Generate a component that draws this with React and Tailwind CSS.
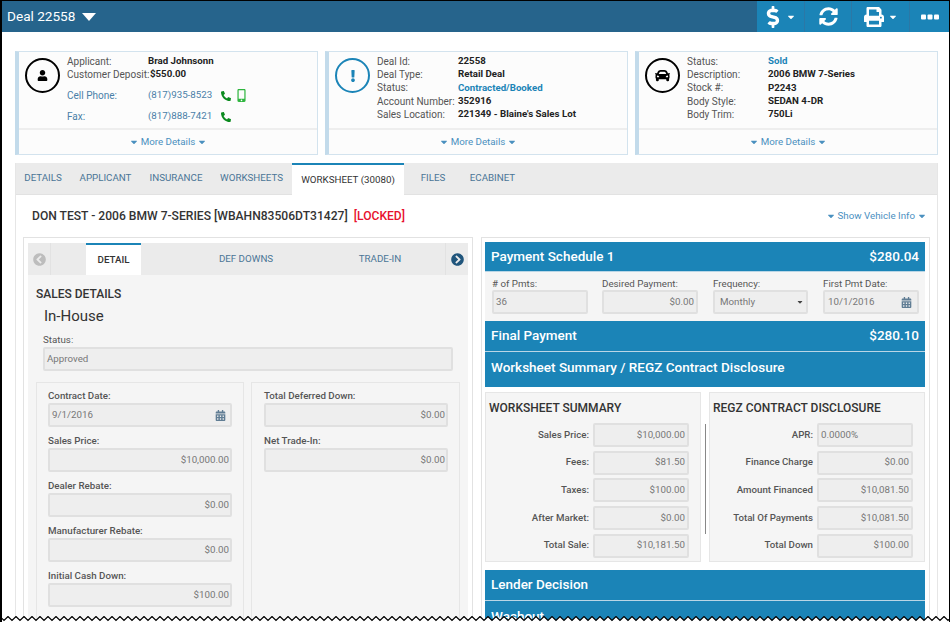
import React from 'react';

import {
  FaCalendarAlt,
  FaCar,
  FaCaretDown,
  FaChevronCircleLeft,
  FaChevronCircleRight,
  FaDollarSign,
  FaExclamation,
  FaMobileAlt,
  FaPhoneAlt,
  FaPrint,
  FaSyncAlt,
  FaUser,
} from 'react-icons/fa';

const Caret = ({ size = 10, className = '' }) => <FaCaretDown size={size} className={className} />;

const MoreLink = ({ label }) => (
  <span className="flex items-center gap-[2px] text-[9.75px] text-[#4a90bf]">
    <Caret />
    {label}
    <Caret />
  </span>
);

const InfoRow = ({ label, value, valueClass = 'font-bold text-[#222]' }) => (
  <div className="flex h-[13.4px] items-center">
    <span className="w-[81px] shrink-0 whitespace-nowrap text-[#555]">{label}</span>
    <span className={`whitespace-nowrap text-[9.7px] ${valueClass}`}>{value}</span>
  </div>
);

const Card = ({ icon, ringClass, children }) => (
  <div className="flex h-[104px] w-[303px] shrink-0 flex-col border border-l-[4px] border-[#d3e3ee] border-l-[#c3dbeb] bg-[#fcfcfc]">
    <div className="flex h-[78px] border-b-2 border-[#eeeeee] pl-[6px] pt-[2.5px] text-[10px]">
      <div className={`mt-[3.5px] flex h-[35px] w-[35px] shrink-0 items-center justify-center rounded-full border-[2px] ${ringClass}`}>
        {icon}
      </div>
      <div className="ml-[7px] flex-1">{children}</div>
    </div>
    <div className="flex flex-1 items-center justify-center">
      <MoreLink label="More Details" />
    </div>
  </div>
);

const Input = ({ value, right, icon, className = '' }) => (
  <div className={`flex h-[24px] items-center justify-between rounded-[2px] border-2 border-[#e0e0e0] bg-[#eeeeee] px-[2px] text-[9.75px] text-[#777] ${className}`}>
    {right && <span />}
    <span>{value}</span>
    {icon}
  </div>
);

const Field = ({ label, value, icon, right = true }) => (
  <div className="mb-[7px]">
    <div className="mb-px h-[13px] text-[9.75px] font-medium leading-[13px] text-[#555]">{label}</div>
    <Input value={value} right={right} icon={icon} className="pr-px" />
  </div>
);

const BlueBar = ({ title, amount, className = '' }) => (
  <div className={`flex items-center justify-between border-b border-[#b9d6e6] bg-[#1b84b7] px-[6px] text-[13.5px] font-medium text-white ${className}`}>
    <span>{title}</span>
    {amount && <span>{amount}</span>}
  </div>
);

const SummaryRow = ({ label, value, left }) => (
  <div className="mb-[3.7px] flex items-center justify-end">
    <span className="mr-1 whitespace-nowrap text-[9.7px] font-medium text-[#555]">{label}</span>
    <Input value={value} right={!left} className="w-[96px]" />
  </div>
);

const calendar = <FaCalendarAlt size={11} className="mr-[3px] text-[#607d94]" />;

const mainTabs = [
  ['DETAILS', 'w-[54px]'],
  ['APPLICANT', 'w-[71px]'],
  ['INSURANCE', 'w-[70px]'],
  ['WORKSHEETS', 'w-[81px]'],
  ['WORKSHEET (30080)', 'w-[112px]'],
  ['FILES', 'w-[58px]'],
  ['ECABINET', 'w-[61px]'],
];

const summary = [
  ['Sales Price:', '$10,000.00'],
  ['Fees:', '$81.50'],
  ['Taxes:', '$100.00'],
  ['After Market:', '$0.00'],
  ['Total Sale:', '$10,181.50'],
];

const disclosure = [
  ['APR:', '0.0000%'],
  ['Finance Charge', '$0.00'],
  ['Amount Financed', '$10,081.50'],
  ['Total Of Payments', '$10,081.50'],
  ['Total Down', '$100.00'],
];

// torn paper edge along the bottom of the screenshot
const tornEdge = () => {
  const points = [];
  for (let x = 0; x <= 956; x += 4) {
    points.push(`${x},${x % 8 === 0 ? 4.5 : 0.5}`);
  }
  return points.join(' ');
};

const App = () => (
  <div className="relative h-[622px] w-[950px] overflow-hidden border-t border-r border-l-2 border-black bg-white text-[#333]" style={{ fontFamily: 'Roboto, sans-serif' }}>
    <header className="flex h-[31px] items-stretch justify-between bg-[#26648c] text-white">
      <div className="flex items-center pl-[5px] text-[13.6px]">
        Deal 22558
        <svg width="14" height="8" viewBox="0 0 14 8" className="ml-[7px]"><path d="M0 0h14L7 8z" fill="#fff" /></svg>
      </div>
      <div className="flex bg-[#1b84b7]">
        <div className="flex w-[48px] items-center justify-center gap-[2px] border-r border-[#2b78a6] pr-[3px]">
          <FaDollarSign size={22} />
          <Caret />
        </div>
        <div className="flex w-[47px] items-center justify-center border-r border-[#2b78a6]">
          <FaSyncAlt size={19} />
        </div>
        <div className="flex w-[58px] items-center justify-center gap-[4px] border-r border-[#2b78a6]">
          <FaPrint size={20} />
          <Caret />
        </div>
        <div className="flex w-[39px] items-center justify-center">
          <svg width="18" height="6" viewBox="0 0 18 6" fill="#fff"><rect width="5" height="5" y="0.5" rx="1" /><rect x="6.5" width="5" height="5" y="0.5" rx="1" /><rect x="13" width="5" height="5" y="0.5" rx="1" /></svg>
        </div>
      </div>
    </header>

    <div className="pl-[13px] pr-[8px] pt-[19px]">
      <div className="flex gap-[7px]">
        <Card ringClass="border-black" icon={<FaUser size={11} className="text-black" />}>
          <InfoRow label="Applicant:" value="Brad Johnsonn" />
          <InfoRow label="Customer Deposit:" value={<span className="ml-[2px]">$550.00</span>} />
          <div className="mt-[7.5px] flex h-[14px] items-center text-[#4a7fa8]">
            <span className="w-[81px]">Cell Phone:</span>
            <span className="text-[9.75px]">(817)935-8523</span>
            <FaPhoneAlt size={10} className="ml-[9px] text-[#0a8a1e]" />
            <FaMobileAlt size={13} className="ml-[4px] text-[#2fb53f]" />
          </div>
          <div className="mt-[7px] flex h-[14px] items-center text-[#4a7fa8]">
            <span className="w-[81px]">Fax:</span>
            <span className="text-[9.75px]">(817)888-7421</span>
            <FaPhoneAlt size={10} className="ml-[9px] text-[#0a8a1e]" />
          </div>
        </Card>
        <Card ringClass="border-[#1b84b7]" icon={<FaExclamation size={12} className="text-[#1b84b7]" />}>
          <InfoRow label="Deal Id:" value="22558" />
          <InfoRow label="Deal Type:" value="Retail Deal" />
          <InfoRow label="Status:" value="Contracted/Booked" valueClass="font-bold text-[#1b84b7]" />
          <InfoRow label="Account Number:" value="352916" />
          <InfoRow label="Sales Location:" value="221349 - Blaine's Sales Lot" />
        </Card>
        <Card ringClass="border-black" icon={<FaCar size={15} className="text-black" />}>
          <InfoRow label="Status:" value="Sold" valueClass="font-bold text-[#1b84b7]" />
          <InfoRow label="Description:" value="2006 BMW 7-Series" />
          <InfoRow label="Stock #:" value="P2243" />
          <InfoRow label="Body Style:" value="SEDAN 4-DR" />
          <InfoRow label="Body Trim:" value="750Li" />
        </Card>
      </div>

      <div className="mt-[8px] w-[923px] border-x border-[#e6e6e6]">
        <nav className="flex h-[32px] border-b border-[#e2e2e2] bg-[#ebebeb] text-[9.75px] text-[#4a7596]">
          {mainTabs.map(([tab, width], i) => (
            <div
              key={tab}
              className={i === 4
                ? `-mb-px flex items-center justify-center border-t-2 border-[#1b84b7] bg-white text-[#333] ${width}`
                : `flex items-center justify-center ${width}`}
            >
              {tab}
            </div>
          ))}
        </nav>

        <div className="flex h-[42px] items-center justify-between pl-[16px] pr-[10px]">
          <div className="text-[12.1px] font-medium text-[#333]">
            DON TEST - 2006 BMW 7-SERIES [WBAHN83506DT31427]
            <span className="ml-[6px] text-[#e8112d]">[LOCKED]</span>
          </div>
          <MoreLink label="Show Vehicle Info" />
        </div>

        <div className="flex gap-[8px] pl-[7px]">
          <section className="h-[400px] w-[450px] border border-[#e2e2e2] px-[4px] pt-[5px]">
            <div className="h-full bg-[#f5f5f5]">
              <div className="flex h-[32px] bg-[#ebebeb] text-[9.75px] text-[#4a7596]">
                <div className="flex w-[23px] items-center justify-center border-r border-[#e2e2e2]">
                  <FaChevronCircleLeft size={13} className="text-[#bdbdbd]" />
                </div>
                <div className="w-[35px]" />
                <div className="flex w-[55px] items-center justify-center border-t-2 border-[#1b84b7] bg-white font-medium text-[#333]">DETAIL</div>
                <div className="flex w-[210px] items-center justify-center">DEF DOWNS</div>
                <div className="flex w-[58px] items-center justify-center">TRADE-IN</div>
                <div className="ml-auto flex w-[23px] items-center justify-center border-l border-[#e2e2e2]">
                  <FaChevronCircleRight size={13} className="text-[#20557c]" />
                </div>
              </div>

              <div className="px-[8px] pt-[12px]">
                <div className="text-[12px] font-medium leading-[14px] text-[#333]">SALES DETAILS</div>
                <div className="ml-[8px] mt-[6px] text-[15px] leading-[18px] text-[#333]">In-House</div>
                <div className="mx-[7px] mt-[8px]">
                  <div className="mb-px text-[9.75px] leading-[13px] text-[#555]">Status:</div>
                  <Input value="Approved" />
                </div>
                <div className="mt-[11px] flex gap-[7px]">
                  <div className="h-[240px] w-[208px] shrink-0 border border-[#e6e6e6] px-[11px] pt-[6px]">
                    <Field label="Contract Date:" value="9/1/2016" right={false} icon={calendar} />
                    <Field label="Sales Price:" value="$10,000.00" />
                    <Field label="Dealer Rebate:" value="$0.00" />
                    <Field label="Manufacturer Rebate:" value="$0.00" />
                    <Field label="Initial Cash Down:" value="$100.00" />
                  </div>
                  <div className="h-[240px] w-[209px] shrink-0 border border-[#e6e6e6] pl-[12px] pr-[11px] pt-[6px]">
                    <Field label="Total Deferred Down:" value="$0.00" />
                    <Field label="Net Trade-In:" value="$0.00" />
                  </div>
                </div>
              </div>
            </div>
          </section>

          <section className="h-[400px] w-[449px] border border-[#e2e2e2] pl-[3px] pr-[4px] pt-[4px]">
            <BlueBar title="Payment Schedule 1" amount="$280.04" className="h-[30px] pb-[1px]" />
            <div className="flex h-[49px] bg-[#f5f5f5] pl-[7px] pt-[5px]">
              <div className="w-[96px]">
                <div className="text-[9.75px] leading-[13px] text-[#555]"># of Pmts:</div>
                <Input value="36" />
              </div>
              <div className="ml-[14px] w-[96px]">
                <div className="text-[9.75px] leading-[13px] text-[#555]">Desired Payment:</div>
                <Input value="$0.00" right />
              </div>
              <div className="ml-[15px] w-[95px]">
                <div className="text-[9.75px] leading-[13px] text-[#555]">Frequency:</div>
                <Input value="Monthly" className="pl-[5px] pr-[2px]" icon={<Caret size={8} className="text-[#444]" />} />
              </div>
              <div className="ml-[15px] w-[96px]">
                <div className="text-[9.75px] leading-[13px] text-[#555]">First Pmt Date:</div>
                <Input value="10/1/2016" className="pl-[3px]" icon={calendar} />
              </div>
            </div>
            <BlueBar title="Final Payment" amount="$280.10" className="h-[31px] pb-[2px]" />
            <BlueBar title="Worksheet Summary / REGZ Contract Disclosure" className="h-[35px] items-start border-b-0 pt-[5px]" />

            <div className="mt-[5px] flex">
              <div className="h-[170px] w-[216px] shrink-0 border border-[#e6e6e6] bg-[#f5f5f5] pl-[3px] pr-[11px] pt-[7px]">
                <div className="mb-[7px] text-[12px] font-medium leading-[16px] text-[#333]">WORKSHEET SUMMARY</div>
                {summary.map(([label, value]) => <SummaryRow key={label} label={label} value={value} />)}
              </div>
              <div className="mx-[3.5px] mt-[32px] h-[110px] w-px shrink-0 bg-[#888]" />
              <div className="h-[170px] w-[216px] shrink-0 border border-[#e6e6e6] bg-[#f5f5f5] pl-[3px] pr-[11px] pt-[7px]">
                <div className="mb-[7px] text-[12px] font-medium leading-[16px] text-[#333]">REGZ CONTRACT DISCLOSURE</div>
                {disclosure.map(([label, value], i) => <SummaryRow key={label} label={label} value={value} left={i === 0} />)}
              </div>
            </div>

            <BlueBar title="Lender Decision" className="mt-[8px] h-[31px] pb-[2px]" />
            <BlueBar title="Washout" className="h-[31px] border-b-0" />
          </section>
        </div>
      </div>
    </div>

    <svg width="956" height="6" viewBox="0 0 956 6" className="absolute bottom-0 left-[-6px]">
      <polygon points={`0,6 ${tornEdge()} 956,6`} fill="#fff" />
      <polyline points={tornEdge()} fill="none" stroke="#000" strokeWidth="1.2" />
    </svg>
  </div>
);

export default App;
